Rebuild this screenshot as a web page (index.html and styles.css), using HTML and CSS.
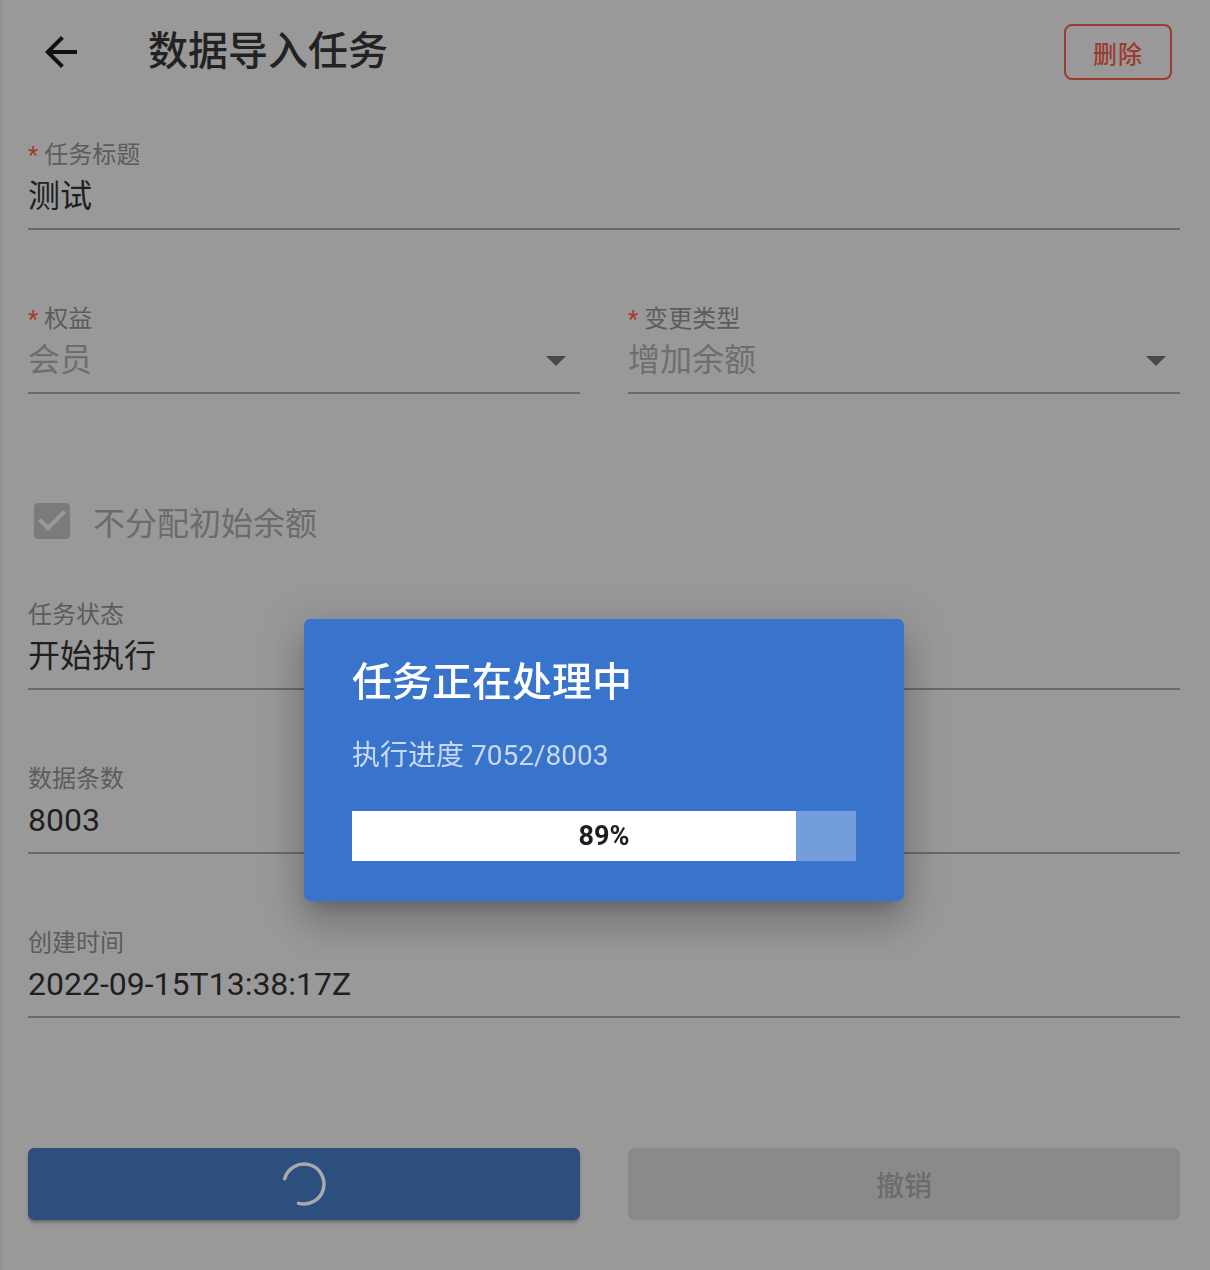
FILE: index.html
```html
<!DOCTYPE html>
<html lang="zh-CN">
<head>
<meta charset="utf-8">
<title>数据导入任务</title>
<link rel="stylesheet" href="styles.css">
</head>
<body>
<div class="page">
  <header class="topbar">
    <button class="back-btn" aria-label="返回">
      <svg viewBox="0 0 24 24" width="48" height="48"><path d="M20 11H7.83l5.59-5.59L12 4l-8 8 8 8 1.41-1.41L7.83 13H20v-2z" fill="#111"/></svg>
    </button>
    <h1 class="title">数据导入任务</h1>
    <button class="delete-btn">删除</button>
  </header>

  <form class="form">
    <div class="field first">
      <div class="label"><span class="req">*</span> 任务标题</div>
      <div class="value">测试</div>
    </div>

    <div class="row">
      <div class="field">
        <div class="label"><span class="req">*</span> 权益</div>
        <div class="value select">
          <span class="muted">会员</span>
          <svg class="caret" viewBox="0 0 24 24" width="48" height="48"><path d="M7 10l5 5 5-5z" fill="#4a4a4a"/></svg>
        </div>
      </div>
      <div class="field">
        <div class="label"><span class="req">*</span> 变更类型</div>
        <div class="value select">
          <span class="muted">增加余额</span>
          <svg class="caret" viewBox="0 0 24 24" width="48" height="48"><path d="M7 10l5 5 5-5z" fill="#4a4a4a"/></svg>
        </div>
      </div>
    </div>

    <label class="check-row">
      <svg viewBox="0 0 24 24" width="48" height="48"><path d="M19 3H5c-1.11 0-2 .9-2 2v14c0 1.1.89 2 2 2h14c1.11 0 2-.9 2-2V5c0-1.1-.89-2-2-2zm-9 14l-5-5 1.41-1.41L10 14.17l7.59-7.59L19 8l-9 9z" fill="#7b7b7b"/></svg>
      <span class="check-text">不分配初始余额</span>
    </label>

    <div class="field after-check">
      <div class="label">任务状态</div>
      <div class="value">开始执行</div>
    </div>
    <div class="field">
      <div class="label">数据条数</div>
      <div class="value">8003</div>
    </div>
    <div class="field">
      <div class="label">创建时间</div>
      <div class="value">2022-09-15T13:38:17Z</div>
    </div>

    <div class="actions">
      <button type="button" class="btn primary">
        <svg class="spinner" viewBox="0 0 48 48" width="48" height="48"><circle cx="24" cy="24" r="20" fill="none" stroke="#a9a9a9" stroke-width="3.5" stroke-linecap="round" stroke-dasharray="94 126" transform="rotate(195 24 24)"/></svg>
      </button>
      <button type="button" class="btn secondary">撤销</button>
    </div>
  </form>
</div>

<div class="dialog-layer">
  <div class="dialog">
    <h2 class="dialog-title">任务正在处理中</h2>
    <p class="dialog-sub">执行进度 7052/8003</p>
    <div class="bar">
      <div class="bar-fill" style="width:88.1%"></div>
      <span class="bar-label">89%</span>
    </div>
  </div>
</div>
</body>
</html>
```

FILE: styles.css
```css
html, body {
  margin: 0;
  padding: 0;
  background: #999999;
}
body {
  font-family: Roboto, "Noto Sans CJK SC", sans-serif;
  color: #1f1f1f;
  width: 1210px;
  height: 1270px;
  overflow: hidden;
}
.page {
  border-left: 3px solid #939393;
  padding: 0 30px 0 25px;
  height: 1270px;
  box-sizing: border-box;
}
.topbar {
  height: 104px;
  display: flex;
  align-items: center;
}
.back-btn {
  border: 0;
  background: none;
  padding: 0;
  margin-left: 9px;
  width: 48px;
  height: 48px;
  display: flex;
}
.title {
  margin: 0 0 0 63px;
  font-size: 40px;
  font-weight: 500;
  color: #222;
  line-height: 48px;
  flex: 1;
}
.delete-btn {
  margin-right: 8px;
  width: 108px;
  height: 56px;
  box-sizing: border-box;
  border: 2px solid #9c3b30;
  border-radius: 8px;
  background: transparent;
  color: #9c3b30;
  font-family: "Noto Sans CJK SC", sans-serif;
  font-size: 24px;
  letter-spacing: 1px;
  font-weight: 500;
  padding: 0;
}
.form {
  display: flex;
  flex-direction: column;
}
.field {
  margin-top: 74px;
  border-bottom: 2px solid #6b6b6b;
  padding-bottom: 12px;
}
.field.first {
  margin-top: 36px;
}
.field.after-check {
  margin-top: 55px;
}
.row .field {
  margin-top: 0;
}
.row {
  margin-top: 74px;
  display: grid;
  grid-template-columns: 1fr 1fr;
  column-gap: 48px;
}
.label {
  font-size: 24px;
  line-height: 28px;
  padding-top: 1px;
  margin-bottom: -1px;
  color: #5c5c5c;
}
.req {
  color: #a33a2e;
  font-family: Roboto, sans-serif;
}
.value {
  margin-top: 8px;
  font-size: 32px;
  line-height: 40px;
  color: #1f1f1f;
}
.value.select {
  display: flex;
  align-items: center;
  justify-content: space-between;
  height: 40px;
}
.muted {
  color: #6e6e6e;
}
.caret {
  margin: -4px 0;
  flex: none;
}
.check-row {
  margin-top: 103px;
  height: 48px;
  display: flex;
  align-items: center;
}
.check-text {
  margin-left: 17px;
  font-size: 32px;
  color: #6b6b6b;
}
.actions {
  margin-top: 130px;
  display: grid;
  grid-template-columns: 1fr 1fr;
  column-gap: 48px;
}
.btn {
  height: 72px;
  border: 0;
  border-radius: 6px;
  display: flex;
  align-items: center;
  justify-content: center;
  font-family: "Noto Sans CJK SC", sans-serif;
  padding: 0;
}
.btn.primary {
  background: #2d4f7e;
  box-shadow: 0 3px 3px -1px rgba(0,0,0,0.25), 0 2px 4px rgba(0,0,0,0.12);
}
.btn.secondary {
  background: #8a8a8a;
  color: #6c6c6c;
  font-size: 28px;
  font-weight: 500;
}
.dialog-layer {
  position: fixed;
  inset: 0;
  display: flex;
  justify-content: center;
  align-items: flex-start;
  padding-top: 619px;
  box-sizing: border-box;
  padding-right: 2px;
}
.dialog {
  width: 600px;
  box-sizing: border-box;
  padding: 40px 48px 40px 48px;
  background: #3874cc;
  border-radius: 6px;
  box-shadow: 0 11px 15px -7px rgba(0,0,0,0.2), 0 24px 38px 3px rgba(0,0,0,0.14), 0 9px 46px 8px rgba(0,0,0,0.12);
}
.dialog-title {
  margin: 0;
  font-size: 40px;
  line-height: 48px;
  font-weight: 500;
  color: #fff;
}
.dialog-sub {
  margin: 31px 0 0;
  font-size: 28px;
  line-height: 36px;
  color: rgba(255,255,255,0.72);
}
.bar {
  margin-top: 37px;
  height: 50px;
  background: #749ddb;
  position: relative;
  display: flex;
}
.bar-fill {
  background: #fff;
  height: 100%;
}
.bar-label {
  position: absolute;
  inset: 0;
  display: flex;
  align-items: center;
  justify-content: center;
  font-size: 27px;
  font-weight: 700;
  color: #1e1e1e;
}
```
